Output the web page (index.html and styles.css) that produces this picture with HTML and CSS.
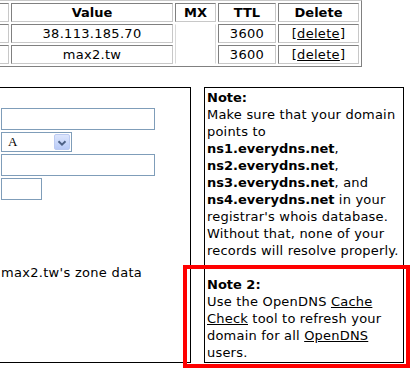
FILE: index.html
```html
<!DOCTYPE html>
<html>
<head>
<meta charset="utf-8">
<title>Zone records</title>
<link rel="stylesheet" href="styles.css">
</head>
<body>
<div class="page">
  <table class="records">
    <tr>
      <th class="c-host"></th>
      <th class="c-val">Value</th>
      <th class="c-mx">MX</th>
      <th class="c-ttl">TTL</th>
      <th class="c-del">Delete</th>
    </tr>
    <tr>
      <td></td>
      <td>38.113.185.70</td>
      <td class="mx-empty" rowspan="2"></td>
      <td>3600</td>
      <td>[<a href="#">delete</a>]</td>
    </tr>
    <tr>
      <td></td>
      <td>max2.tw</td>
      <td>3600</td>
      <td>[<a href="#">delete</a>]</td>
    </tr>
  </table>

  <div class="panels">
    <div class="formbox">
      <div class="fields">
        <input class="field wide" type="text">
        <div class="select">
          <span class="sel-val">A</span>
          <span class="sel-btn"><svg width="16" height="16" viewBox="0 0 16 16"><polyline points="4,6 8,10 12,6" fill="none" stroke="#4d6185" stroke-width="2.2"/></svg></span>
        </div>
        <input class="field wide" type="text">
        <input class="field short" type="text">
      </div>
      <p class="zone">max2.tw's zone data</p>
    </div>

    <div class="note">
      <b>Note:</b><br>
      Make sure that your domain points to<br>
      <b>ns1.everydns.net</b>, <b>ns2.everydns.net</b>, <b>ns3.everydns.net</b>, and <b>ns4.everydns.net</b> in your registrar's whois database. Without that, none of your records will resolve properly.<br>
      <br>
      <b>Note 2:</b><br>
      Use the OpenDNS <a href="#">Cache Check</a> tool to refresh your domain for all <a href="#">OpenDNS</a> users.
    </div>
  </div>

  <div class="highlight"></div>
</div>
</body>
</html>
```

FILE: styles.css
```css
* { box-sizing: border-box; }

html, body {
  margin: 0;
  padding: 0;
  background: #fff;
}

body {
  font-family: "DejaVu Sans", Verdana, sans-serif;
  font-size: 13px;
  color: #000;
}

.page {
  position: relative;
  width: 414px;
  height: 369px;
  overflow: hidden;
}

a { color: #000; text-decoration: underline; }

/* records table */
.records {
  margin-left: -50px;
  width: 412px;
  table-layout: fixed;
  border-collapse: separate;
  border-spacing: 2px;
  border: 1px solid;
  border-color: #c8c8c8 #808080 #808080 #c8c8c8;
}

.records th,
.records td {
  height: 19px;
  padding: 1px 2px;
  line-height: 15px;
  border: 1px solid;
  border-color: #808080 #c8c8c8 #c8c8c8 #808080;
  text-align: center;
  white-space: nowrap;
  overflow: hidden;
  font-weight: normal;
  letter-spacing: 0.3px;
}

.records th {
  font-weight: bold;
  letter-spacing: 0;
}

.records .mx-empty {
  border-color: #fff #d8d8d8 #fff #d8d8d8;
}

.c-host { width: 56px; }
.c-val { width: 162px; }
.c-mx { width: 41px; }
.c-ttl { width: 58px; }
.c-del { width: 81px; }

/* lower panels */
.panels {
  display: flex;
  align-items: stretch;
  gap: 13px;
  margin-top: 20px;
}

.formbox {
  width: 211px;
  margin-left: -20px;
  padding: 20px 0 0 20px;
  border: 1px solid #000;
}

.fields {
  display: flex;
  flex-direction: column;
  align-items: flex-start;
  gap: 2px;
}

.field {
  display: block;
  height: 22px;
  margin: 0;
  padding: 0 2px;
  border: 1px solid #7f9db9;
  background: #fff;
  font: 13px "DejaVu Sans", sans-serif;
}

.field.wide { width: 154px; }
.field.short { width: 41px; }

.select {
  display: flex;
  align-items: center;
  justify-content: space-between;
  width: 71px;
  height: 20px;
  padding: 1px;
  border: 1px solid #7f9db9;
  background: #fff;
}

.sel-val {
  padding-left: 5px;
  font: 13px "Liberation Serif", serif;
  line-height: 16px;
}

.sel-btn {
  display: flex;
  width: 16px;
  height: 16px;
  border: 1px solid #bccbf2;
  border-radius: 2px;
  background: linear-gradient(#dde6fd, #b9cbf7);
}

.zone {
  margin: 64px 0 0;
  line-height: 17px;
  letter-spacing: 0.3px;
}

.note {
  width: 200px;
  padding: 1px 0 1px 2px;
  border: 1px solid #000;
  line-height: 17px;
  letter-spacing: 0.2px;
}

.note b { letter-spacing: 0; }

/* annotation overlay */
.highlight {
  position: absolute;
  left: 183px;
  top: 265px;
  width: 227px;
  height: 103px;
  border: 4px solid #f00;
}
```
